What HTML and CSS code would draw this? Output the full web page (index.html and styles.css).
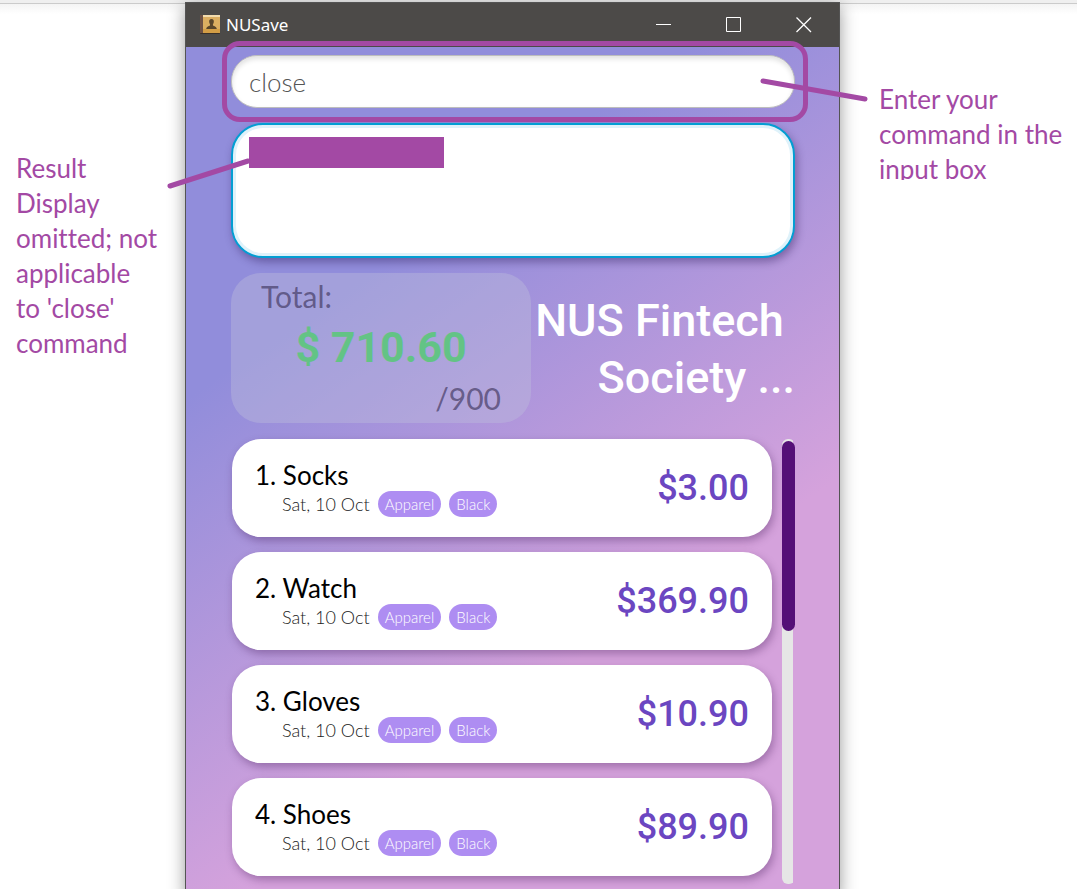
FILE: index.html
```html
<!DOCTYPE html>
<html lang="en">
<head>
<meta charset="utf-8">
<title>NUSave</title>
<link rel="stylesheet" href="styles.css">
</head>
<body>
<div class="page">
  <aside class="note note-left">Result<br>Display<br>omitted; not<br>applicable<br>to 'close'<br>command</aside>
  <main class="window">
    <header class="titlebar">
      <svg class="app-icon" width="22" height="22" viewBox="0 0 22 22" aria-hidden="true">
        <rect x="1" y="1" width="20" height="19" rx="1" fill="#3a3028"/>
        <rect x="1" y="1" width="3" height="18" fill="#6d5145"/>
        <rect x="4" y="1" width="17" height="18" fill="#dcae61"/>
        <rect x="4" y="1" width="17" height="2" fill="#f3dcae"/>
        <rect x="4" y="15" width="17" height="4" fill="#d39d45"/>
        <path d="M12.500 5c2 0 2.500 1.400 2.300 3-.2 1.400-.9 2-.9 3 0 1.200 3.600 1 3.900 4H7.200c.3-3 3.900-2.800 3.900-4 0-1-.7-1.600-.9-3-.2-1.600.3-3 2.300-3z" fill="#59452b"/>
      </svg>
      <span class="app-name">NUSave</span>
      <div class="controls">
        <button aria-label="Minimize"><svg width="16" height="16" viewBox="0 0 16 16"><path d="M0 7.500h15"/></svg></button>
        <button aria-label="Maximize"><svg width="16" height="16" viewBox="0 0 16 16"><path d="M.5 .5h14v14H.5z"/></svg></button>
        <button aria-label="Close"><svg width="16" height="16" viewBox="0 0 16 16"><path d="M.5 .5l14.500 14.500M15 .5L.5 15" stroke-width="1.300"/></svg></button>
      </div>
    </header>
    <div class="content">
      <div class="command">
        <input class="command-input" type="text" value="close" aria-label="Command">
        <svg class="pointer pointer-right" width="108" height="24" aria-hidden="true"><path d="M3 3L105 21"/></svg>
      </div>
      <div class="result">
        <div class="redacted"></div>
        <svg class="pointer pointer-left" width="84" height="31" aria-hidden="true"><path d="M3 28L81 3"/></svg>
      </div>
      <section class="summary">
        <div class="budget">
          <div class="budget-label">Total:</div>
          <div class="budget-amount">$ 710.60</div>
          <div class="budget-limit">/900</div>
        </div>
        <h1 class="account">NUS Fintech&nbsp;<br>Society ...</h1>
      </section>
      <section class="expenses">
        <ol class="cards">
          <li class="card"><div><h2>1. Socks</h2><p class="meta"><span class="date">Sat, 10 Oct</span><span class="tag">Apparel</span><span class="tag">Black</span></p></div><span class="price">$3.00</span></li>
          <li class="card"><div><h2>2. Watch</h2><p class="meta"><span class="date">Sat, 10 Oct</span><span class="tag">Apparel</span><span class="tag">Black</span></p></div><span class="price">$369.90</span></li>
          <li class="card"><div><h2>3. Gloves</h2><p class="meta"><span class="date">Sat, 10 Oct</span><span class="tag">Apparel</span><span class="tag">Black</span></p></div><span class="price">$10.90</span></li>
          <li class="card"><div><h2>4. Shoes</h2><p class="meta"><span class="date">Sat, 10 Oct</span><span class="tag">Apparel</span><span class="tag">Black</span></p></div><span class="price">$89.90</span></li>
        </ol>
        <div class="scroll"><div class="thumb"></div></div>
      </section>
    </div>
  </main>
  <aside class="note note-right">Enter your<br>command in the<br>input box</aside>
</div>
</body>
</html>
```
FILE: styles.css
```css
* { box-sizing: border-box; }
body {
  margin: 0;
  font-family: Lato, "Liberation Sans", sans-serif;
  background: linear-gradient(#efefef 3px, #cbcbcb 3px, #cbcbcb 4px, #f4f4f4 4px, #fff 14px) no-repeat #fff;
}
.page {
  display: grid;
  grid-template-columns: 185fr 655fr 237fr;
  min-height: 100vh;
  padding-top: 2px;
}
.note {
  align-self: start;
  color: #a349a4;
  font-size: 26px;
  line-height: 35px;
  font-variant-ligatures: none;
  white-space: nowrap;
}
.note-left { padding: 149px 0 0 16px; }
.note-right {
  margin: 80px 0 0 39px;
  max-height: 98px;
  overflow: hidden;
}
.window {
  display: flex;
  flex-direction: column;
  border: 1px solid #545454;
  border-bottom: 0;
  box-shadow: 0 4px 16px rgba(0, 0, 0, .4);
}
.titlebar {
  display: flex;
  align-items: center;
  height: 44px;
  padding-left: 13px;
  background: #4c4a48;
  color: #fff;
}
.app-name {
  margin-left: 5px;
  font: 17px/24px "Noto Sans", sans-serif;
}
.controls { display: flex; margin-left: auto; }
.controls button {
  width: 70px;
  height: 44px;
  padding: 0;
  border: 0;
  background: none;
}
.controls svg { display: block; margin: auto; fill: none; stroke: #fff; }
.content {
  flex: 1;
  padding: 8px 44px 12px 45px;
  background: linear-gradient(145deg, #918ddb 27%, #d5a2dc 68%);
}
.command { position: relative; z-index: 1; }
.command::after {
  content: "";
  position: absolute;
  inset: -14px -13px -14px -9px;
  border: 5px solid #a349a4;
  border-radius: 18px;
  pointer-events: none;
}
.command-input {
  display: block;
  width: 100%;
  height: 53px;
  padding: 0 17px;
  border: 1px solid #bdbdbd;
  border-radius: 26px;
  background: #fff;
  box-shadow: inset 0 3px 5px rgba(0, 0, 0, .12);
  color: #555;
  font: 300 26px Lato, sans-serif;
  outline: 0;
}
.pointer {
  position: absolute;
  z-index: 2;
  fill: none;
  stroke: #a349a4;
  stroke-width: 5;
  stroke-linecap: round;
}
.pointer-right { right: -73px; top: 23px; }
.pointer-left { left: -66px; top: 33px; }
.result {
  position: relative;
  height: 135px;
  margin-top: 15px;
  padding: 12px 16px;
  border: 2px solid #039ed3;
  border-radius: 32px;
  background: #fff;
  box-shadow: inset 0 0 0 3px #dff2fa, 2px 4px 9px rgba(40, 20, 80, .4);
}
.redacted { width: 37%; height: 31px; background: #a349a4; }
.summary {
  display: flex;
  justify-content: space-between;
  margin-top: 15px;
}
.budget {
  width: 300px;
  height: 150px;
  padding: 5px 30px;
  border-radius: 30px;
  background: rgba(190, 190, 220, .4);
  color: rgba(60, 50, 90, .65);
  font-size: 30px;
  line-height: 36px;
}
.budget-amount {
  color: #63c385;
  font: 700 43px/66px Roboto, sans-serif;
  text-align: center;
}
.budget-limit { text-align: right; }
.account {
  margin: 19px 0 0;
  color: #fff;
  font: 500 45px/57px Roboto, sans-serif;
  text-align: right;
  white-space: nowrap;
}
.expenses {
  display: flex;
  justify-content: space-between;
  gap: 10px;
  margin-top: 16px;
}
.cards {
  flex: 1;
  display: grid;
  align-content: start;
  gap: 15px;
  margin: 0 0 0 1px;
  padding: 0;
  list-style: none;
}
.card {
  display: flex;
  justify-content: space-between;
  height: 98px;
  padding: 20px 23px;
  border-radius: 29px;
  background: #fff;
  box-shadow: 2px 4px 8px rgba(60, 20, 80, .35);
}
.card h2 {
  margin: 0;
  color: #000;
  font-size: 26px;
  font-weight: 400;
  line-height: 32px;
}
.meta {
  display: flex;
  align-items: center;
  gap: 8px;
  margin: 0 0 0 27px;
  color: #222;
  font-size: 18px;
  font-weight: 300;
  line-height: 26px;
}
.tag {
  padding: 0 7px;
  border-radius: 13px;
  background: #ae8df2;
  color: #fff;
  font-size: 15px;
}
.price {
  color: #6b46c1;
  font: 500 36px/58px Roboto, sans-serif;
}
.scroll {
  width: 13px;
  height: 445px;
  background: linear-gradient(90deg, #e6e6e6 11px, transparent 11px);
  border-radius: 6px;
}
.thumb {
  height: 190px;
  margin-top: 2px;
  border-radius: 7px;
  background: #540f77;
}
```
